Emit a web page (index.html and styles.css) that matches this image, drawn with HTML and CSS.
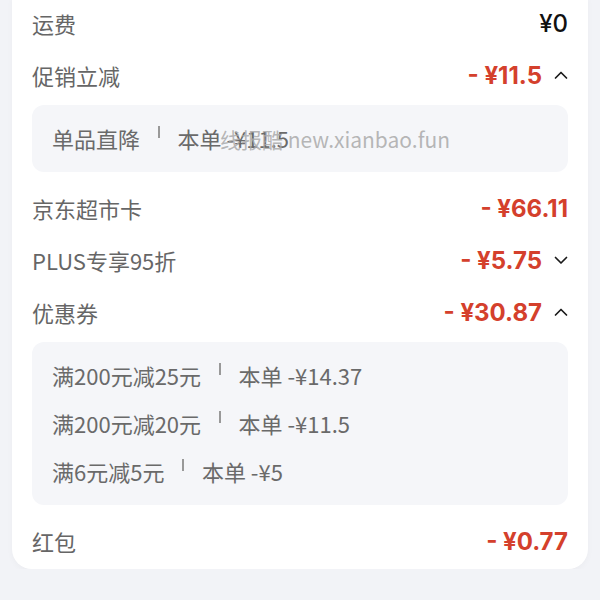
FILE: index.html
```html
<!DOCTYPE html>
<html lang="zh-CN">
<head>
    <meta charset="UTF-8">
    <meta name="viewport" content="width=device-width, initial-scale=1.0">
    <title>订单优惠明细</title>
    <link rel="stylesheet" href="styles.css">
</head>
<body>
    <div class="card">
        <div class="row first">
            <span class="label">运费</span>
            <span class="amount plain">¥0</span>
        </div>

        <div class="row">
            <span class="label">促销立减</span>
            <span class="right">
                <span class="amount">- ¥11.5</span>
                <svg class="arrow" width="14" height="10" viewBox="0 0 14 10"><polyline points="1.5,8 7,2.5 12.5,8" /></svg>
            </span>
        </div>
        <div class="detail">
            <div class="line">
                <span>单品直降</span><i class="sep"></i><span>本单 -¥11.5</span>
            </div>
            <div class="watermark">线报酷 new.xianbao.fun</div>
        </div>

        <div class="row">
            <span class="label">京东超市卡</span>
            <span class="amount">- ¥66.11</span>
        </div>

        <div class="row">
            <span class="label">PLUS专享95折</span>
            <span class="right">
                <span class="amount">- ¥5.75</span>
                <svg class="arrow" width="14" height="10" viewBox="0 0 14 10"><polyline points="1.5,2.5 7,8 12.5,2.5" /></svg>
            </span>
        </div>

        <div class="row">
            <span class="label">优惠券</span>
            <span class="right">
                <span class="amount">- ¥30.87</span>
                <svg class="arrow" width="14" height="10" viewBox="0 0 14 10"><polyline points="1.5,8 7,2.5 12.5,8" /></svg>
            </span>
        </div>
        <div class="detail">
            <div class="line">
                <span>满200元减25元</span><i class="sep"></i><span>本单 -¥14.37</span>
            </div>
            <div class="line">
                <span>满200元减20元</span><i class="sep"></i><span>本单 -¥11.5</span>
            </div>
            <div class="line">
                <span>满6元减5元</span><i class="sep"></i><span>本单 -¥5</span>
            </div>
        </div>

        <div class="row">
            <span class="label">红包</span>
            <span class="amount">- ¥0.77</span>
        </div>
    </div>
</body>
</html>
```

FILE: styles.css
```css
body {
    margin: 0;
    background: #f2f3f7;
    font-family: "Noto Sans CJK SC", sans-serif;
    overflow: hidden;
}
.card {
    margin: 0 12px;
    padding: 0 20px 2px;
    background: #fff;
    border-radius: 0 0 20px 20px;
    box-shadow: 0 2px 6px rgba(0,0,0,0.03);
}
.row {
    height: 52px;
    display: flex;
    align-items: center;
    justify-content: space-between;
}
.row.first {
    margin-top: -3px;
}
.label {
    font-size: 22px;
    color: #666;
}
.right {
    display: flex;
    align-items: center;
}
.amount {
    font-family: Inter, "Noto Sans CJK SC", sans-serif;
    font-size: 24px;
    font-weight: 700;
    color: #d4402c;
}
.amount.plain {
    color: #111;
    font-weight: 500;
}
.arrow {
    margin-left: 12px;
}
.arrow polyline {
    fill: none;
    stroke: #1a1a1a;
    stroke-width: 1.7;
    stroke-linecap: round;
    stroke-linejoin: round;
}
.detail {
    position: relative;
    margin: 4px 0 10px;
    padding: 9px 20px 10px;
    background: #f5f6f9;
    border-radius: 12px;
}
.line {
    height: 48px;
    display: flex;
    align-items: center;
    font-size: 22px;
    color: #6a6a6a;
}
.line span + span {
    letter-spacing: 0.4px;
}
.sep {
    width: 1.5px;
    height: 12px;
    margin: 0 18px;
    background: #999;
    position: relative;
    top: -6px;
}
.watermark {
    position: absolute;
    left: 188px;
    top: 21px;
    font-size: 21px;
    line-height: 26px;
    color: rgba(170,170,170,0.85);
    white-space: nowrap;
}
```
